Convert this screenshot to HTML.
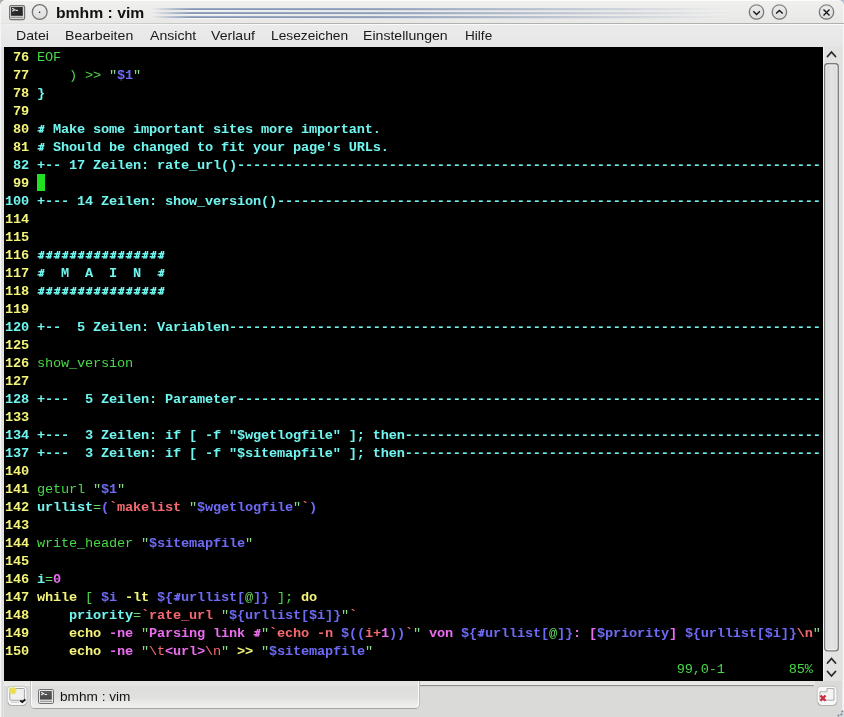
<!DOCTYPE html>
<html><head><meta charset="utf-8">
<style>
*{margin:0;padding:0;box-sizing:border-box}
html,body{width:844px;height:717px;overflow:hidden;background:linear-gradient(to right,#a8aaac 50%,#b0c2d8 50%)}
body{position:relative;font-family:"Liberation Sans",sans-serif;-webkit-font-smoothing:antialiased}
.abs{position:absolute}
.mi,#ttl,#tabtxt{will-change:transform}
#win{position:absolute;left:0;top:0;width:844px;height:717px;background:#e2e2e0;border-radius:6px 6px 0 0;
 box-shadow: inset 1px 0 0 #f6f6f6, inset -1px 0 0 #f8f8f8}
#title{position:absolute;left:1px;top:0;width:842px;height:23px;background:linear-gradient(#f0f0ee,#e8e8e6);border-radius:6px 6px 0 0}
#tline{position:absolute;left:0;top:23px;width:844px;height:1px;background:linear-gradient(to right,#e4e4e2 0,#d0d0ce 120px,#b0b0ae 330px,#b0b0ae 100%)}
#tline2{position:absolute;left:0;top:24px;width:844px;height:1px;background:linear-gradient(to right,#eeeeee 0,#fbfbfb 300px)}
#menu{position:absolute;left:1px;top:25px;width:842px;height:22px;background:linear-gradient(#ebebeb,#e6e6e6)}
.mi{position:absolute;top:29px;font-size:12.6px;color:#1a1a1a;white-space:nowrap;transform-origin:0 0;transform:scaleX(1.12)}
#ttl{position:absolute;left:56px;top:4.5px;font-size:14.3px;transform-origin:0 0;transform:scaleX(1.10);font-weight:bold;color:#111;white-space:nowrap}
.deco{position:absolute;left:152px;width:575px;height:3px;top:-1px;
 background:linear-gradient(to right, rgba(100,125,170,0) 0px, rgba(105,125,160,0.8) 40px, rgba(105,125,160,0.7) 220px, rgba(100,125,170,0) 575px)}
.deco::before{content:"";position:absolute;left:0;top:0;width:100%;height:1px;background:linear-gradient(to right, rgba(190,210,240,0), rgba(190,210,240,0.35) 40px, rgba(190,210,240,0) 575px)}
.deco::after{content:"";position:absolute;left:0;top:2px;width:100%;height:1px;background:linear-gradient(to right, rgba(255,255,255,0.3), rgba(255,255,255,0.95) 40px, rgba(255,255,255,0.2) 575px)}
#term{position:absolute;left:4px;top:47px;width:819px;height:634px;background:#000}
#txt{position:absolute;left:1px;top:2px;will-change:transform;font-family:"Liberation Mono",monospace;font-size:13.6px;letter-spacing:-0.1612px;font-weight:bold;color:#b2b2b2}
.r{height:18px;line-height:18px;white-space:pre}
.ln{color:#f4f47a}
.fl{color:#70f6f0}
.y{color:#f4f47a}
.c{color:#70f6f0}
.g{color:#66d866;font-weight:normal}
.q{color:#88dc88;font-weight:normal}
.gn{color:#48d848;font-weight:normal}
.b{color:#6e6af4}


span.rd{color:#f46a70}
.rn{color:#f46a70;font-weight:normal}
.m{color:#ec6cf0}
.cur{background:#20e020}
.hs{display:inline-block;width:8px;height:18px;vertical-align:top;transform:skewX(-14deg);transform-origin:50% 8px;
 background-image:linear-gradient(currentColor,currentColor),linear-gradient(currentColor,currentColor),linear-gradient(currentColor,currentColor),linear-gradient(currentColor,currentColor);
 background-repeat:no-repeat;
 background-size:1.5px 7.8px,1.5px 7.8px,6px 1.5px,6px 1.5px;
 background-position:2.6px 4px,5.3px 4px,1.2px 5.7px,1.2px 9.1px}
/* scrollbar */
#sb{position:absolute;left:823px;top:47px;width:20px;height:634px;background:#e2e2e0}
</style></head><body>
<div id="win"></div>
<div id="title"></div>
<div class="abs" style="left:4px;top:0;width:836px;height:1px;background:linear-gradient(to right,rgba(255,255,255,0.4),rgba(255,255,255,0.9) 30px,rgba(255,255,255,0.9) 806px,rgba(255,255,255,0.4))"></div>
<div id="tline"></div><div id="tline2"></div>
<svg class="abs" style="left:9px;top:5px" width="17" height="16" viewBox="0 0 17 16">
 <rect x="0.6" y="0.6" width="15" height="14" rx="1.5" fill="#dadada" stroke="#747474" stroke-width="1.2"/>
 <defs><linearGradient id="scr" x1="0" y1="0" x2="1" y2="1"><stop offset="0" stop-color="#3c3c3c"/><stop offset="1" stop-color="#1e1e1e"/></linearGradient></defs>
 <rect x="2" y="2" width="11.8" height="8.8" fill="url(#scr)"/>
 <path d="M3.2 3.3 L5.6 4.8 L3.2 6.2" stroke="#e4e4e4" stroke-width="1.2" fill="none"/>
 <path d="M6.4 5.4 H9" stroke="#e4e4e4" stroke-width="1.1"/>
 <path d="M2 12.3 H14" stroke="#8a8a8a" stroke-width="1"/>
</svg>
<svg class="abs" style="left:31px;top:3px" width="18" height="18" viewBox="0 0 18 18">
 <defs><linearGradient id="cg" x1="0" y1="0" x2="0" y2="1"><stop offset="0" stop-color="#eeeeee"/><stop offset="1" stop-color="#dcdcdc"/></linearGradient></defs>
 <circle cx="8.7" cy="9" r="7.4" fill="url(#cg)" stroke="#747474" stroke-width="1.3"/>
 <circle cx="8.6" cy="9.3" r="0.75" fill="#111"/>
</svg>
<div id="ttl">bmhm : vim</div>
<div class="deco" style="top:8px"></div>
<div class="deco" style="top:12px"></div>
<div class="deco" style="top:16px"></div>
<svg class="abs" style="left:748px;top:3px" width="90" height="19" viewBox="0 0 90 19">
 <defs><linearGradient id="bg1" x1="0" y1="0" x2="0" y2="1"><stop offset="0" stop-color="#ececec"/><stop offset="1" stop-color="#dedede"/></linearGradient>
 <linearGradient id="rim" x1="0" y1="0" x2="0" y2="1"><stop offset="0" stop-color="#8a8a8a"/><stop offset="1" stop-color="#6a6a6a"/></linearGradient></defs>
 <g fill="url(#bg1)" stroke="url(#rim)" stroke-width="1.3">
  <circle cx="8.5" cy="9" r="7.2"/>
  <circle cx="31.4" cy="9" r="7.2"/>
  <circle cx="78.5" cy="9" r="7.2"/>
 </g>
 <g fill="none" stroke="#141414" stroke-width="1.35">
  <path d="M5.3 8.3 L8.6 11.5 L11.9 8.3"/>
  <path d="M28.1 10.6 L31.4 7.4 L34.7 10.6"/>
  <path d="M75.5 6.4 L81.5 12.4 M81.5 6.4 L75.5 12.4"/>
 </g>
</svg>
<div id="menu"></div>
<div class="mi" style="left:16px">Datei</div>
<div class="mi" style="left:64.5px">Bearbeiten</div>
<div class="mi" style="left:150px">Ansicht</div>
<div class="mi" style="left:211px">Verlauf</div>
<div class="mi" style="left:271px;transform:scaleX(1.09)">Lesezeichen</div>
<div class="mi" style="left:363px">Einstellungen</div>
<div class="mi" style="left:465px;transform:scaleX(1.08)">Hilfe</div>
<div id="term"><div id="txt"><div class="r"><span class="ln"> 76 </span><span class="gn">EOF</span></div>
<div class="r"><span class="ln"> 77 </span>    <span class="gn">)</span> <span class="gn">&gt;&gt;</span> <span class="q">"</span><span class="b">$1</span><span class="q">"</span></div>
<div class="r"><span class="ln"> 78 </span><span class="c">}</span></div>
<div class="r"><span class="ln"> 79 </span></div>
<div class="r"><span class="ln"> 80 </span><span class="c"><span class="hs"></span> Make some important sites more important.</span></div>
<div class="r"><span class="ln"> 81 </span><span class="c"><span class="hs"></span> Should be changed to fit your page's URLs.</span></div>
<div class="r"><span class="fl"> 82 </span><span class="c">+-- 17 Zeilen: rate_url()-------------------------------------------------------------------------</span></div>
<div class="r"><span class="ln"> 99 </span> </div>
<div class="r"><span class="fl">100 </span><span class="c">+--- 14 Zeilen: show_version()--------------------------------------------------------------------</span></div>
<div class="r"><span class="ln">114 </span></div>
<div class="r"><span class="ln">115 </span></div>
<div class="r"><span class="ln">116 </span><span class="c"><span class="hs"></span><span class="hs"></span><span class="hs"></span><span class="hs"></span><span class="hs"></span><span class="hs"></span><span class="hs"></span><span class="hs"></span><span class="hs"></span><span class="hs"></span><span class="hs"></span><span class="hs"></span><span class="hs"></span><span class="hs"></span><span class="hs"></span><span class="hs"></span></span></div>
<div class="r"><span class="ln">117 </span><span class="c"><span class="hs"></span>  M  A  I  N  <span class="hs"></span></span></div>
<div class="r"><span class="ln">118 </span><span class="c"><span class="hs"></span><span class="hs"></span><span class="hs"></span><span class="hs"></span><span class="hs"></span><span class="hs"></span><span class="hs"></span><span class="hs"></span><span class="hs"></span><span class="hs"></span><span class="hs"></span><span class="hs"></span><span class="hs"></span><span class="hs"></span><span class="hs"></span><span class="hs"></span></span></div>
<div class="r"><span class="ln">119 </span></div>
<div class="r"><span class="fl">120 </span><span class="c">+--  5 Zeilen: Variablen--------------------------------------------------------------------------</span></div>
<div class="r"><span class="ln">125 </span></div>
<div class="r"><span class="ln">126 </span><span class="gn">show_version</span></div>
<div class="r"><span class="ln">127 </span></div>
<div class="r"><span class="fl">128 </span><span class="c">+---  5 Zeilen: Parameter-------------------------------------------------------------------------</span></div>
<div class="r"><span class="ln">133 </span></div>
<div class="r"><span class="fl">134 </span><span class="c">+---  3 Zeilen: if [ -f "$wgetlogfile" ]; then----------------------------------------------------</span></div>
<div class="r"><span class="fl">137 </span><span class="c">+---  3 Zeilen: if [ -f "$sitemapfile" ]; then----------------------------------------------------</span></div>
<div class="r"><span class="ln">140 </span></div>
<div class="r"><span class="ln">141 </span><span class="gn">geturl </span><span class="q">"</span><span class="b">$1</span><span class="q">"</span></div>
<div class="r"><span class="ln">142 </span><span class="c">urllist</span><span class="g">=</span><span class="b">(</span><span class="rd">`</span><span class="rd">makelist </span><span class="q">"</span><span class="b">$wgetlogfile</span><span class="q">"</span><span class="rd">`</span><span class="b">)</span></div>
<div class="r"><span class="ln">143 </span></div>
<div class="r"><span class="ln">144 </span><span class="gn">write_header </span><span class="q">"</span><span class="b">$sitemapfile</span><span class="q">"</span></div>
<div class="r"><span class="ln">145 </span></div>
<div class="r"><span class="ln">146 </span><span class="c">i</span><span class="g">=</span><span class="m">0</span></div>
<div class="r"><span class="ln">147 </span><span class="y">while</span> <span class="gn">[</span> <span class="b">$i</span> <span class="y">-lt</span> <span class="b">${<span class="hs"></span>urllist[</span><span class="g">@</span><span class="b">]}</span><span class="gn"> ];</span><span class="y"> do</span></div>
<div class="r"><span class="ln">148 </span>    <span class="c">priority</span><span class="g">=</span><span class="rd">`</span><span class="rd">rate_url </span><span class="q">"</span><span class="b">${urllist[$i]}</span><span class="q">"</span><span class="rd">`</span></div>
<div class="r"><span class="ln">149 </span>    <span class="y">echo</span> <span class="m">-ne</span> <span class="q">"</span><span class="m">Parsing link <span class="hs"></span></span><span class="q">"</span><span class="rd">`</span><span class="rd">echo -n </span><span class="b">$((</span><span class="rd">i+</span><span class="m">1</span><span class="b">))</span><span class="rd">`</span><span class="q">"</span><span class="m"> von </span><span class="b">${<span class="hs"></span>urllist[</span><span class="g">@</span><span class="b">]}</span><span class="m">: [</span><span class="b">$priority</span><span class="m">]</span> <span class="b">${urllist[$i]}</span><span class="rd">\n</span><span class="q">"</span></div>
<div class="r"><span class="ln">150 </span>    <span class="y">echo</span> <span class="m">-ne</span> <span class="q">"</span><span class="rn">\t</span><span class="m">&lt;url&gt;</span><span class="rn">\n</span><span class="q">"</span><span class="y"> &gt;&gt; </span><span class="q">"</span><span class="b">$sitemapfile</span><span class="q">"</span></div>
<div class="r">                                                                                    <span class="gn">99,0-1</span>        <span class="gn">85%</span></div></div></div>
<div class="abs" style="left:37px;top:174px;width:8px;height:17px;background:#20e020"></div>
<div id="sb"></div>
<div class="abs" style="left:823px;top:47px;width:1px;height:634px;background:#f4f4f4"></div>
<svg class="abs" style="left:823px;top:47px" width="20" height="634" viewBox="0 0 20 634">
 <path d="M4.5 9.5 L8.5 5 L12.5 9.5" fill="none" stroke="#2a2a2a" stroke-width="1.8" stroke-linecap="round"/>
 <defs><linearGradient id="sl" x1="0" y1="0" x2="1" y2="0"><stop offset="0" stop-color="#d4d4d4"/><stop offset="0.5" stop-color="#e4e4e4"/><stop offset="1" stop-color="#d8d8d8"/></linearGradient></defs>
 <rect x="1.7" y="16.7" width="13.5" height="587.2" rx="2.8" fill="url(#sl)" stroke="#7a7a7a" stroke-width="1.4"/>
 <rect x="3" y="18" width="10.9" height="584.6" rx="1.5" fill="none" stroke="#f4f4f4" stroke-width="0.9" opacity="0.85"/>
 <path d="M4.5 616 L8.5 611.5 L12.5 616" fill="none" stroke="#2a2a2a" stroke-width="1.8" stroke-linecap="round"/>
 <path d="M4.5 624.5 L8.5 629 L12.5 624.5" fill="none" stroke="#2a2a2a" stroke-width="1.8" stroke-linecap="round"/>
</svg>
<!-- tab bar -->
<div id="tabbar" class="abs" style="left:0;top:681px;width:844px;height:36px;background:#dadad8"></div>
<div class="abs" style="left:0;top:681px;width:815px;height:5px;background:linear-gradient(#e6e6e4,#ececea);border-radius:0 0 3px 0"></div>
<div class="abs" style="left:842px;top:681px;width:2px;height:36px;background:linear-gradient(to right,#e8e8e8,#f8f8f8)"></div>
<div class="abs" style="left:419px;top:685px;width:395px;height:1px;background:#8e8e8c;border-radius:0 0 2px 0"></div>
<div class="abs" style="left:419px;top:686px;width:395px;height:1px;background:#d0d0ce"></div>
<div class="abs" style="left:0;top:681px;width:4px;height:36px;background:linear-gradient(to right,#f6f6f6 0,#f6f6f6 1px,#e6e6ea 1px,#e6e6ea 2px,#d6d6d6 2px,#d6d6d6 3px,#e4e4e4 3px)"></div>
<div id="tab" class="abs" style="left:31px;top:681px;width:388px;height:27px;background:linear-gradient(#e4e4e2 0,#e4e4e2 4px,#dededc 5px,#e0e0de 60%,#ececea 85%,#eeeeec);border-radius:0 0 4px 4px;border-left:1px solid #fcfcfc;border-right:1px solid #fcfcfc;box-shadow:-1px 0 0 #c4c4c2, 1px 0 0 #bdbcb9, 0 1px 0 #a4a4a2"></div>
<svg class="abs" style="left:6px;top:685px" width="23" height="22" viewBox="0 0 23 22">
 <rect x="1.2" y="1.2" width="19.8" height="19.3" rx="4" fill="#f8f8f8" stroke="#c4c4c2" stroke-width="1"/>
 <path d="M2 17 Q2 20.5 5.5 20.5 H17 Q20.5 20.5 20.5 17" fill="none" stroke="#b0b0ae" stroke-width="1"/>
 <rect x="3.8" y="3.5" width="14.6" height="11.8" rx="0.8" fill="#f0f0f0" stroke="#9a9a9a" stroke-width="0.9"/>
 <path d="M5 17.2 H13" stroke="#b8b8b8" stroke-width="0.8"/>
 <circle cx="6.9" cy="5.7" r="3.1" fill="#ecdc44"/>
 <circle cx="6.9" cy="5.7" r="4" fill="#f0e070" opacity="0.35"/>
 <path d="M14.2 15.4 L16.2 17 L19.4 14.4" fill="none" stroke="#1a1a1a" stroke-width="1.9"/>
</svg>
<svg class="abs" style="left:38px;top:689px" width="16" height="15" viewBox="0 0 16 15">
 <defs><linearGradient id="scr2" x1="0" y1="0" x2="0" y2="1"><stop offset="0" stop-color="#5e5e5e"/><stop offset="1" stop-color="#464646"/></linearGradient></defs>
 <rect x="0.5" y="0.5" width="15" height="14" rx="1.3" fill="#e6e6e6" stroke="#707070" stroke-width="1"/>
 <rect x="2" y="2" width="11.8" height="8.6" fill="url(#scr2)"/>
 <path d="M3.2 3.2 L5.6 4.6 L3.2 6" stroke="#ececec" stroke-width="1.1" fill="none"/>
 <path d="M6.5 5.5 H9" stroke="#ececec" stroke-width="1.1"/>
 <path d="M2 12.3 H14" stroke="#8c8c8c" stroke-width="1"/>
</svg>
<div id="tabtxt" class="abs" style="left:60px;top:690px;font-size:12.5px;transform-origin:0 0;transform:scaleX(1.09);color:#141414;white-space:nowrap">bmhm : vim</div>
<svg class="abs" style="left:816px;top:685px" width="23" height="22" viewBox="0 0 23 22">
 <rect x="1.2" y="1.2" width="19.8" height="19.3" rx="4" fill="#f8f8f8" stroke="#c4c4c2" stroke-width="1"/>
 <path d="M2 17 Q2 20.5 5.5 20.5 H17 Q20.5 20.5 20.5 17" fill="none" stroke="#b0b0ae" stroke-width="1"/>
 <path d="M4 6.8 H11 V3.6 H18 V15.2 H4 Z" fill="#f4f4f4" stroke="#a4a4a4" stroke-width="0.9"/>
 <path d="M4.5 10.5 L9.5 15.8 M9.5 10.5 L4.5 15.8" stroke="#c83040" stroke-width="2.4"/>
</svg>
<svg class="abs" style="left:830px;top:704px" width="14" height="13" viewBox="0 0 14 13">
 <path d="M14 6 L14 13 L7 13 Z" fill="#c4d0dc" opacity="0.7"/>
 <circle cx="12.4" cy="7.4" r="0.9" fill="#7a7a7a"/>
 <circle cx="11.4" cy="10.4" r="0.9" fill="#7a7a7a"/>
 <circle cx="8.4" cy="11.4" r="0.9" fill="#7a7a7a"/>
</svg>
</body></html>
